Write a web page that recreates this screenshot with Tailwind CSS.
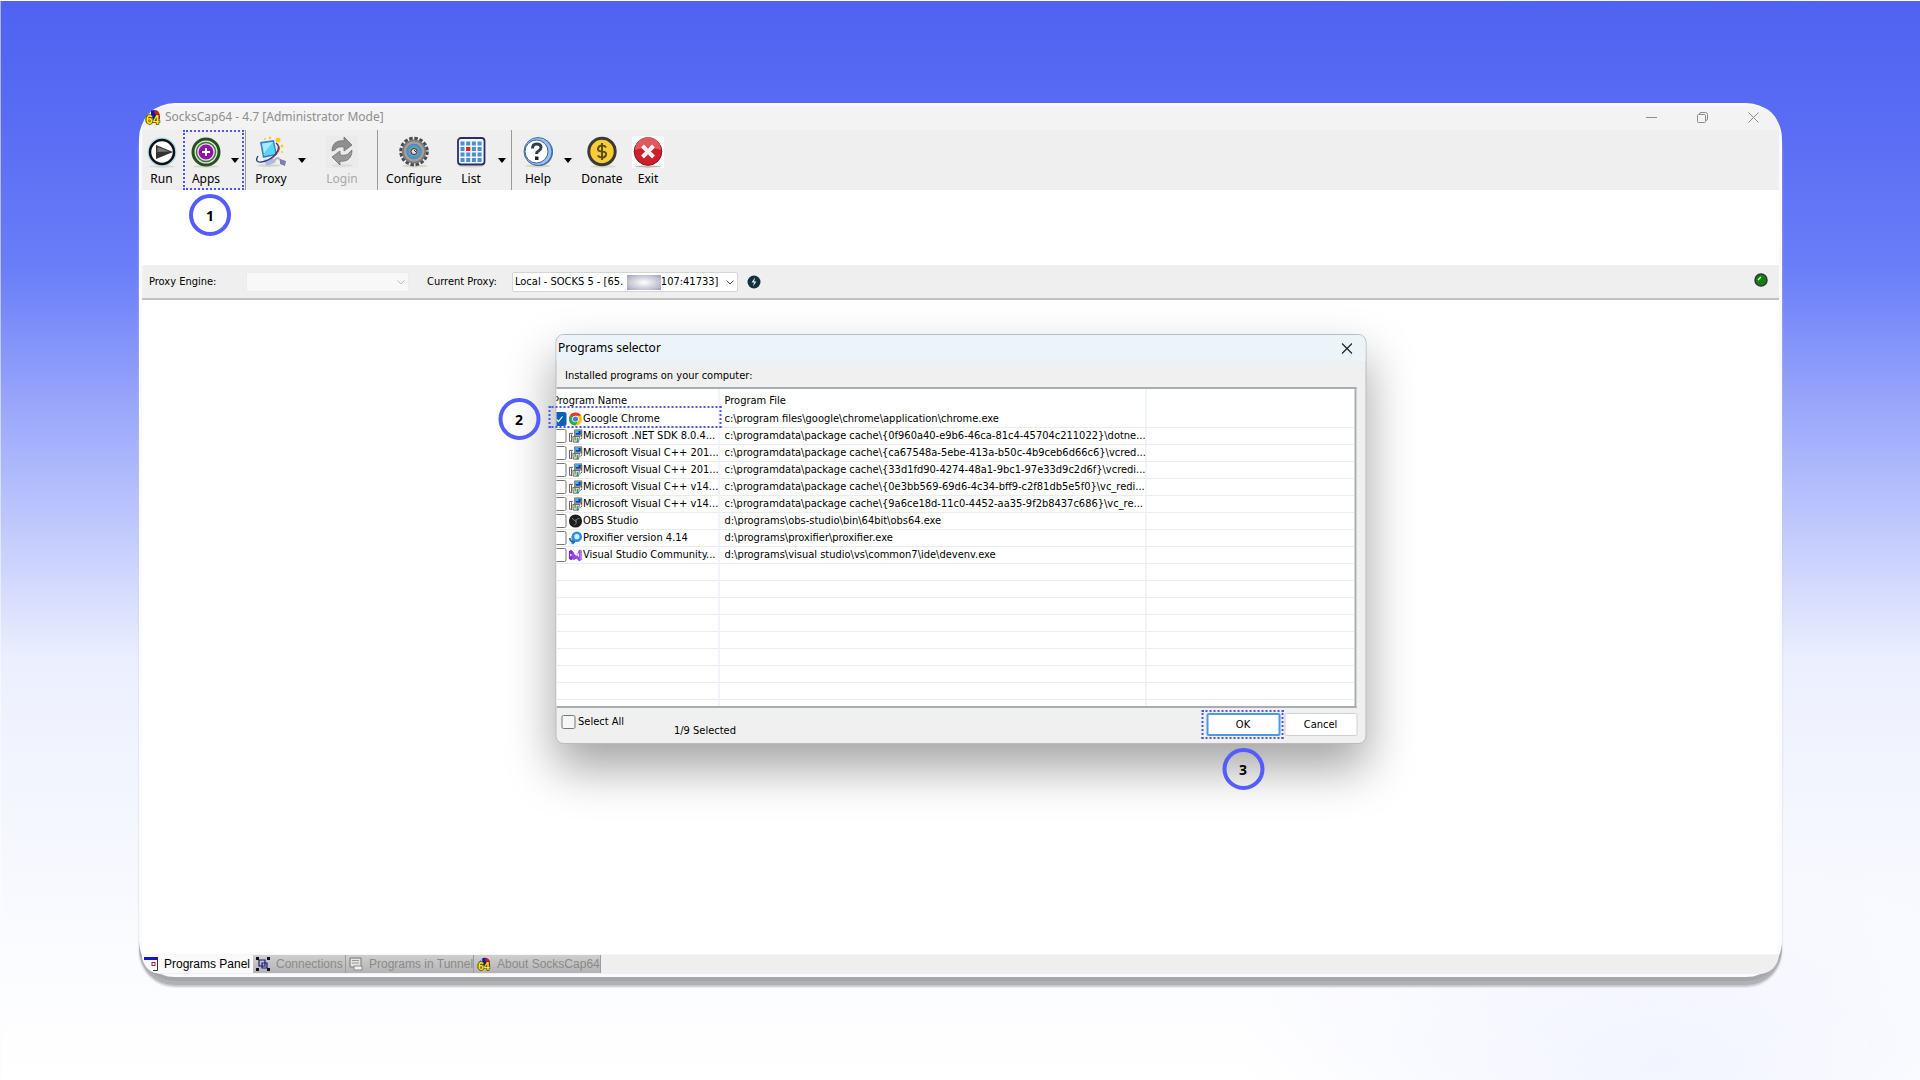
<!DOCTYPE html>
<html lang="en">
<head>
    <meta charset="UTF-8">
    <meta name="viewport" content="width=device-width, initial-scale=1.0">
    <title>SocksCap64 - 4.7 [Administrator Mode]</title>
    <script src="https://cdn.jsdelivr.net/npm/@tailwindcss/browser@4"></script>
</head>
<body class="font-['Noto_Sans',sans-serif] text-xs text-black">

    <!-- Shared icons -->
    <svg class="hidden">
        <symbol id="logo" viewBox="0 0 16 16">
            <path d="M6 1.500q5-2 8 2.500l1 6-4 3-5-5z" fill="#0d17b8"/>
            <path d="M11 1q3 1 3.500 4l.5 5-3-2-3-5z" fill="#e01616"/>
            <path d="M5 3 1 8v5" stroke="#777" fill="none"/>
            <text x="1" y="15" font-family="Liberation Sans" font-size="12" font-weight="bold" fill="#ffe81a" stroke="#4a4300" stroke-width="1.500" paint-order="stroke">64</text>
        </symbol>
        <symbol id="chrome" viewBox="0 0 16 16">
            <circle cx="8" cy="8" r="7.500" fill="#fbc116"/>
            <path d="M8 8 1.500 4.250A7.500 7.500 0 0 1 14.500 4.250H8z" fill="#e33b2e"/>
            <path d="M1.500 4.250A7.500 7.500 0 0 0 8 15.500L11.250 9.900 8 8z" fill="#2da94f"/>
            <circle cx="8" cy="8" r="3.800" fill="#fff"/>
            <circle cx="8" cy="8" r="2.900" fill="#3b7ded"/>
        </symbol>
        <symbol id="setup" viewBox="0 0 16 16">
            <path d="M7 1h8.500v7H7z" fill="#c9cdd0" stroke="#444" stroke-width=".8"/>
            <path d="M8 2h6v4.500H8z" fill="#0a3fae"/>
            <path d="M8 2h3.500v2.500H8z" fill="#29c3ee"/>
            <path d="M15.500 2v8l-2 2" fill="none" stroke="#222"/>
            <path d="M1 5h4M1 5v9h2M3.500 6v9" fill="none" stroke="#444"/>
            <path d="M5 8.500h7.500l-1 6.500H5.500z" fill="#eef3ee" stroke="#333" stroke-width=".8"/>
            <path d="M7.500 9v4M10 10v5" stroke="#14883d" stroke-width="1.300"/>
            <path d="M5 9.500 7 12" stroke="#d9c31c"/>
        </symbol>
        <symbol id="obs" viewBox="0 0 16 16">
            <circle cx="8" cy="8" r="7.500" fill="#1c1c1e"/>
            <path d="M4 4.500q2 4 5 2.500M12.500 5q-4.500.5-4 4M6.500 13q3.500-2 2-5" fill="none" stroke="#8b8b8d"/>
        </symbol>
        <symbol id="proxifier" viewBox="0 0 16 16">
            <circle cx="9.500" cy="6.500" r="4.500" fill="#d3ecfb" stroke="#2f8fdc" stroke-width="3"/>
            <path d="M5 6v9" stroke="#2f8fdc" stroke-width="3"/>
            <path d="M1.500 8q0 5 6 4.500" fill="none" stroke="#1b62b5" stroke-width="2"/>
        </symbol>
        <symbol id="vs" viewBox="0 0 16 16">
            <path d="M0 4 3 2l3 3v7l-3 2-3-2z" fill="#7b2bcb"/>
            <path d="M4 4l5 5 3-7 3.500 1.500v10L12 15l-3-3-3 2-2-2z" fill="#9a45ea"/>
            <path d="M12 5.500v5L9.500 8z" fill="#fff"/>
            <path d="M2 6v4l2-2z" fill="#fff"/>
            <path d="M13 1.500 15.500 3v10L13 14.500z" fill="#c17bf8"/>
        </symbol>
        <symbol id="caret" viewBox="0 0 8 5"><path d="M0 0h8L4 5z"/></symbol>
        <symbol id="tick" viewBox="0 0 14 14"><path d="m4 7.500 2 2 4-5" fill="none" stroke="#fff" stroke-width="1.200"/></symbol>
    </svg>

    <main class="flex min-h-screen flex-col border-l border-t border-l-white/50 border-t-white/40 bg-[radial-gradient(ellipse_420px_220px_at_1660px_1060px,#f2f4ff_0%,#f2f4ff00_100%),linear-gradient(to_bottom,#4f62f1_0%,#5a6df4_12%,#6a7ef8_25%,#9ba8fa_38%,#c8d0fc_51%,#eceffe_61%,#f2f4fe_70%,#fafbff_86%,#ffffff_100%)] bg-cover px-[138px] pt-[102px] pb-[103px]">

        <!-- Main window -->
        <div class="relative flex flex-1 flex-col rounded-[36px] border-[3px] border-[#fbfbff] bg-white shadow-[0_4px_0_0_#a5a6aa,0_8px_0_0_#b0b1b5,0_10px_2px_0_#c4c5ca]">

            <header class="flex h-6 items-center rounded-t-[33px] bg-[#f3f3f3] pb-[2px] pl-[3px]">
                <svg class="size-4"><use href="#logo"/></svg>
                <h1 class="ml-1 text-xs text-[#8e8e8e]">SocksCap64 - 4.7 [Administrator Mode]</h1>
                <div class="ml-auto flex items-center gap-10 pr-5 text-[#8c8c8c]">
                    <button aria-label="Minimize"><svg class="size-[11px]" viewBox="0 0 11 11"><path d="M0 5.500h11" stroke="currentColor"/></svg></button>
                    <button aria-label="Restore"><svg class="size-[11px]" viewBox="0 0 11 11" fill="none" stroke="currentColor"><rect x=".5" y="2.500" width="8" height="8" rx="1"/><path d="M2.500 2.500V2q0-1.500 1.500-1.500h4.500q2 0 2 2V7q0 1.500-2 1.500"/></svg></button>
                    <button aria-label="Close"><svg class="size-[11px]" viewBox="0 0 11 11"><path d="m.5.5 10 10m0-10-10 10" stroke="currentColor"/></svg></button>
                </div>
            </header>

            <!-- Toolbar -->
            <nav class="flex h-[60px] items-stretch bg-[#efefef]">
                <button class="flex w-[39px] flex-col items-center gap-[3px] pt-[6px]">
                    <svg class="size-8" viewBox="0 0 32 32">
                        <ellipse cx="16" cy="30.500" rx="13" ry="1.200" fill="#d9d6c8"/>
                        <circle cx="16" cy="16" r="14.500" fill="#a9dcf2"/>
                        <circle cx="16" cy="16" r="12" fill="#fff" stroke="#111" stroke-width="2.500"/>
                        <path d="M10 9v14l17-7z" fill="#333"/><path d="M11.500 11v5l12-.500z" fill="#777"/>
                    </svg>
                    <span>Run</span>
                </button>
                <div class="relative ml-[2px] flex w-[61px] border-2 border-dotted border-[#4a55f5]">
                    <button class="flex w-[42px] flex-col items-center gap-[3px] pt-1">
                        <svg class="size-8" viewBox="0 0 32 32">
                            <ellipse cx="16" cy="30.500" rx="13" ry="1.200" fill="#d9d6c8"/>
                            <circle cx="16" cy="16" r="13" fill="#dfe8dc" stroke="#26501f" stroke-width="3"/>
                            <circle cx="16" cy="16" r="9.500" fill="#ece8ee" stroke="#45743b" stroke-width="1.500"/>
                            <circle cx="16" cy="16" r="7.500" fill="#9016a8"/>
                            <path d="M16 12v8M12 16h8" stroke="#fff" stroke-width="2"/>
                        </svg>
                        <span>Apps</span>
                    </button>
                    <button aria-label="Apps menu" class="flex-1 pl-1"><svg class="h-[5px] w-2"><use href="#caret"/></svg></button>
                    <span class="absolute left-1 top-[62px] flex size-[42px] items-center justify-center rounded-full border-4 border-[#525dfb] pt-px text-sm font-bold">1</span>
                </div>
                <div class="mx-px w-px bg-[#9a9a9a]"></div>
                <button class="ml-px flex w-[46px] flex-col items-center gap-[3px] pt-[6px]">
                    <svg class="size-8" viewBox="0 0 32 32">
                        <ellipse cx="14" cy="29.500" rx="12" ry="1.500" fill="#d9d6c8"/>
                        <path d="m8 24 10-2 3 4-9 4z" fill="#aeb8e4"/>
                        <path d="M5 6 19 4l3 15L8 22z" fill="#2f83cc"/>
                        <path d="m7 7.500 11-1.500 2.500 12L9 20z" fill="#5bd3f8"/>
                        <path d="m7 7.500 11-1.500L9 17z" fill="#a6ebfd"/>
                        <path d="M21 7c6 4 0 13-8 17C4 28-1 26 3 20" fill="none" stroke="#1d3474" stroke-width="1.300"/>
                        <path d="M24 10q2 6-8 13" fill="none" stroke="#d42020"/>
                        <path d="M18 27q4-8 7-3l3 3" fill="none" stroke="#b4b6cf" stroke-width="2"/>
                        <path d="m25 23 6 2-1 5-5-2z" fill="#7a7fb0"/>
                        <g fill="#fccb18"><circle cx="23" cy="4" r="2.500"/><circle cx="27" cy="10" r="1.500"/><circle cx="15" cy="2" r="1.300"/><circle cx="10" cy="3" r="1"/><circle cx="27" cy="16" r="1"/></g>
                    </svg>
                    <span>Proxy</span>
                </button>
                <button aria-label="Proxy menu" class="w-[14px] pl-1"><svg class="h-[5px] w-2"><use href="#caret"/></svg></button>
                <button disabled class="ml-px flex w-[66px] flex-col items-center gap-[3px] pt-[6px] text-[#a9a9a9]">
                    <svg class="size-8 bg-[#ebebeb]" viewBox="0 0 32 32">
                        <ellipse cx="16" cy="29.500" rx="11" ry="1.500" fill="#ddd"/>
                        <path d="M6 15C6 6 13 4 18 5V1l8 8-8 6v-4q-7-1-9 3z" fill="#8f8f8f" stroke="#6f6f6f" stroke-width=".8"/>
                        <path d="M26 14c0 10-7 12-12 11v4l-8-8 8-6v4q7 1 9-2z" fill="#999" stroke="#707070" stroke-width=".8"/>
                    </svg>
                    <span>Login</span>
                </button>
                <div class="mx-[2px] w-px bg-[#9a9a9a]"></div>
                <button class="ml-px flex w-[66px] flex-col items-center gap-[3px] pt-[6px]">
                    <svg class="size-8" viewBox="0 0 32 32">
                        <ellipse cx="17" cy="30" rx="13" ry="1.500" fill="#d9d6c8"/>
                        <circle cx="16" cy="15.500" r="13" fill="none" stroke="#4c4c4c" stroke-width="3.500" stroke-dasharray="3.400 1.700"/>
                        <circle cx="16" cy="15.500" r="12" fill="#7b7b7b"/>
                        <circle cx="16" cy="15.500" r="9" fill="none" stroke="#a0a0a0" stroke-width="2.500"/>
                        <circle cx="16" cy="15.500" r="6" fill="#8b9297" stroke="#2f9fe6" stroke-width="1.800"/>
                        <circle cx="16" cy="15.500" r="3" fill="#ddd" stroke="#333"/><path d="m16 14 2 2" stroke="#222"/>
                    </svg>
                    <span>Configure</span>
                </button>
                <button class="flex w-12 flex-col items-center gap-[3px] pt-[6px]">
                    <svg class="size-8" viewBox="0 0 32 32">
                        <ellipse cx="16" cy="30" rx="13" ry="1.500" fill="#d9d6c8"/>
                        <rect x="3" y="2" width="26.500" height="26.500" rx="3" fill="#f3f6fb" stroke="#2c2c6c" stroke-width="1.800"/>
                        <path d="M5.500 7.500h22M5.500 13h22M5.500 18.500h22M5.500 24h22" stroke="#4a90cc" stroke-width="4" stroke-dasharray="4 1.700"/>
                        <path d="M11.200 11h4v4h-4z" fill="#ff1515"/>
                    </svg>
                    <span>List</span>
                </button>
                <button aria-label="List menu" class="w-[14px] pl-[3px]"><svg class="h-[5px] w-2"><use href="#caret"/></svg></button>
                <div class="mx-[2px] w-px bg-[#9a9a9a]"></div>
                <button class="flex w-12 flex-col items-center gap-[3px] pt-[6px]">
                    <svg class="size-8" viewBox="0 0 32 32">
                        <ellipse cx="16" cy="30" rx="13" ry="1.500" fill="#d9d6c8"/>
                        <circle cx="17" cy="16" r="14" fill="#2f66ae"/><circle cx="16" cy="15.500" r="14" fill="#9cc0e8" stroke="#3b6db0"/>
                        <circle cx="14.500" cy="15.500" r="11.500" fill="#fff" stroke="#3a5f94"/>
                        <path d="M10.500 12.500q0-4.500 4-4.500 4.500 0 4.500 3.500 0 2-2.500 3.500-2 1-2 3" fill="none" stroke="#33414a" stroke-width="3"/>
                        <path d="M13 20.500h3.500V24H13z" fill="#222"/>
                    </svg>
                    <span>Help</span>
                </button>
                <button aria-label="Help menu" class="w-[14px] pl-[2px]"><svg class="h-[5px] w-2"><use href="#caret"/></svg></button>
                <button class="flex w-[52px] flex-col items-center gap-[3px] pt-[6px]">
                    <svg class="size-8" viewBox="0 0 32 32">
                        <ellipse cx="17" cy="30.500" rx="13" ry="1.200" fill="#d9d6c8"/>
                        <circle cx="16" cy="15.500" r="13.200" fill="#f8cd33" stroke="#3a3a3a" stroke-width="3"/>
                        <path d="M20 11.500q-1-2-4-2t-4 2.800 4 3.200 4 3.300-4 2.700-4.300-2M16 7v17" fill="none" stroke="#5c4d1d" stroke-width="2"/>
                    </svg>
                    <span>Donate</span>
                </button>
                <button class="flex w-10 flex-col items-center gap-[3px] pt-[6px]">
                    <svg class="size-8 bg-white" viewBox="0 0 32 32">
                        <ellipse cx="16" cy="30.500" rx="13" ry="1.200" fill="#bbb"/>
                        <circle cx="16" cy="15.500" r="13.800" fill="#c9202a" stroke="#8f141b"/>
                        <path d="M3 14a13 13 0 0 1 26 0q-13-5-26 0z" fill="#de5a60"/>
                        <path d="m10.500 10 11 11m0-11-11 11" stroke="#f4f4f4" stroke-width="4"/>
                    </svg>
                    <span>Exit</span>
                </button>
            </nav>

            <div class="h-[75px] shrink-0"></div>

            <!-- Proxy bar -->
            <div class="flex h-[35px] items-center border-b-2 border-[#c2c2c2] bg-[#efefef] pl-[7px] pr-[11px] font-['DejaVu_Sans_Condensed','DejaVu_Sans',sans-serif] text-[11px] font-[stretch:condensed]">
                <label for="engine" class="w-[97px] pt-px">Proxy Engine:</label>
                <div class="relative w-[163px]">
                    <select id="engine" disabled class="h-5 w-full appearance-none rounded-xs border border-[#ececec] bg-[#f8f8f8]"><option></option></select>
                    <svg class="pointer-events-none absolute right-1 top-2 h-[5px] w-2" viewBox="0 0 8 5"><path d="m.5.5 3.500 3.500L7.500.5" fill="none" stroke="#bbb"/></svg>
                </div>
                <label for="proxy" class="ml-[18px] w-[85px] pt-px">Current Proxy:</label>
                <div class="relative w-[226px]">
                    <select id="proxy" class="h-5 w-full appearance-none rounded-xs border border-[#d6d6d6] bg-white pl-[2px] pt-px"><option>Local - SOCKS 5 - [65.&nbsp;&nbsp;&nbsp;&nbsp;&nbsp;&nbsp;&nbsp;&nbsp;&nbsp;&nbsp;&nbsp;.107:41733]</option></select>
                    <span class="pointer-events-none absolute left-[115px] top-[3px] h-[15px] w-[34px] bg-[radial-gradient(ellipse,#ffffff_0%,#c4c4d4_65%,#9c9cc4_100%)]"></span>
                    <svg class="pointer-events-none absolute right-1 top-2 h-[5px] w-2" viewBox="0 0 8 5"><path d="m.5.5 3.500 3.500L7.500.5" fill="none" stroke="#555"/></svg>
                </div>
                <button aria-label="Test proxy" class="ml-[9px]"><svg class="size-[14px]" viewBox="0 0 14 14"><circle cx="7" cy="7" r="6.500" fill="#14303a"/><path d="M8 2.500 4.500 7.500H7L6 11.500 9.500 6.500H7.200z" fill="#d8eef2"/></svg></button>
                <svg class="mb-1 ml-auto size-[14px]" viewBox="0 0 14 14"><circle cx="7" cy="7" r="6" fill="#0a850a" stroke="#333" stroke-width="1.500"/><path d="m4 7 3-3" stroke="#fff" stroke-width="1.500"/></svg>
            </div>

            <div class="flex-1"></div>

            <!-- Bottom tabs -->
            <div role="tablist" class="flex h-5 items-start overflow-hidden whitespace-nowrap rounded-b-[33px] border-t border-[#f6f6f6] bg-[#efefef] font-['Liberation_Sans',sans-serif] text-[12px] text-[#8a8a8a]">
                <button role="tab" aria-selected="true" class="flex h-[18px] w-[111px] items-center gap-[6px] bg-[#fafafa] pl-[2px] text-black">
                    <svg class="size-[14px]" viewBox="0 0 14 14"><path d="M0 1.500h14" stroke="#1414c8" stroke-width="3"/><path d="M13.500 2v11.500H9" stroke="#333" fill="none"/><rect x="8" y="5.500" width="3" height="3" fill="#fff" stroke="#a22"/></svg>
                    Programs Panel
                </button>
                <button role="tab" class="flex h-[18px] w-[93px] items-center gap-[6px] border-r border-[#9c9c9c] bg-linear-to-b from-[#cfcfcf] to-[#b4b4b4] pl-[3px]">
                    <svg class="size-[14px]" viewBox="0 0 14 14"><path d="M3 3h6v6H3zM6 6h5v5H6z" fill="none" stroke="#1a1a80" stroke-width="1.200"/><path d="M0 0h3v3H0zM11 0h3v3h-3zM0 11h3v3H0zM11 11h3v3h-3z" fill="#111"/></svg>
                    Connections
                </button>
                <button role="tab" class="flex h-[18px] w-[128px] items-center gap-[6px] border-r border-[#9c9c9c] bg-linear-to-b from-[#cfcfcf] to-[#b4b4b4] pl-[3px]">
                    <svg class="size-[14px] shrink-0" viewBox="0 0 14 14"><path d="M1 1h11v9H1z" fill="#e3e3e3" stroke="#777"/><path d="M3 3.500h7M3 6h7" stroke="#999"/><path d="M5 9h8v4H5z" fill="#f4f4f4" stroke="#888"/></svg>
                    Programs in Tunnel
                </button>
                <button role="tab" class="flex h-[18px] w-[127px] items-center gap-[6px] border-r border-[#9c9c9c] bg-linear-to-b from-[#cfcfcf] to-[#b4b4b4] pl-[3px]">
                    <svg class="size-[14px]"><use href="#logo"/></svg>
                    About SocksCap64
                </button>
            </div>

            <!-- Programs selector dialog -->
            <section role="dialog" aria-label="Programs selector" class="absolute left-1/2 top-[228px] flex w-[811px] -translate-x-1/2 flex-col rounded-lg border border-[#b9bbbd] bg-[#f0f0f0] font-['DejaVu_Sans_Condensed','DejaVu_Sans',sans-serif] text-[11px] leading-4 font-[stretch:condensed] shadow-[0_24px_48px_0_rgba(0,0,0,0.36)]">
                <div class="flex h-[26px] items-center rounded-t-[7px] bg-[#ecf4f9] pl-[2px] pr-[13px] font-['Noto_Sans',sans-serif]">
                    <h2 class="text-[12px]">Programs selector</h2>
                    <button aria-label="Close dialog" class="ml-auto"><svg class="size-[11px]" viewBox="0 0 11 11"><path d="m.5.5 10 10m0-10-10 10" stroke="#222" stroke-width="1.200"/></svg></button>
                </div>
                <p class="h-[26px] pl-[9px] pt-[7px]">Installed programs on your computer:</p>
                <div class="mr-[9px] overflow-hidden border-y-2 border-r-2 border-[#a9adb2] bg-white">
                    <table class="w-full table-fixed border-collapse whitespace-nowrap text-left leading-[14px]">
                        <colgroup><col class="w-[163px]"><col class="w-[427px]"><col></colgroup>
                        <thead>
                            <tr class="h-[21px]"><th class="border-r border-[#e6ebf0] pt-[2px] font-normal"><span class="-ml-[3px]">Program Name</span></th><th class="border-r border-[#e6ebf0] pl-[5px] pt-[2px] font-normal">Program File</th><th></th></tr>
                        </thead>
                        <tbody id="programs"></tbody>
                    </table>
                </div>
                <div class="flex h-[35px] pl-[5px] pr-2">
                    <label class="flex h-4 items-center gap-[3px] pt-3"><input type="checkbox" class="size-[14px] appearance-none rounded-xs border border-[#777] bg-[#f6f6f6]"> Select All</label>
                    <p class="ml-[50px] pt-[15px]">1/9 Selected</p>
                    <div class="relative ml-auto mt-[5px] flex h-[23px] gap-1">
                        <button class="w-[74px] rounded-xs border-2 border-[#4c9be0] bg-white pt-px">OK</button>
                        <button class="w-[73px] rounded-xs border border-[#d0d0d0] bg-white pt-px">Cancel</button>
                        <span class="pointer-events-none absolute -left-[5px] -top-[3px] h-[29px] w-[82px] border-2 border-dotted border-[#4a55f5]"></span>
                        <span class="absolute left-4 top-[35px] flex size-[42px] items-center justify-center rounded-full border-4 border-[#525dfb] pt-px font-['Noto_Sans',sans-serif] text-sm font-bold">3</span>
                    </div>
                </div>
                <span class="pointer-events-none absolute -left-2 top-[71px] h-[22px] w-[173px] border-2 border-dotted border-[#4a55f5]"></span>
                <span class="absolute -left-[58px] top-[63px] flex size-[42px] items-center justify-center rounded-full border-4 border-[#525dfb] pt-px font-['Noto_Sans',sans-serif] text-sm font-bold">2</span>
            </section>
        </div>
    </main>

    <script>
        const programs = [
            ['chrome', 'Google Chrome', 'c:\\program files\\google\\chrome\\application\\chrome.exe'],
            ['setup', 'Microsoft .NET SDK 8.0.4...', 'c:\\programdata\\package cache\\{0f960a40-e9b6-46ca-81c4-45704c211022}\\dotne...'],
            ['setup', 'Microsoft Visual C++ 201...', 'c:\\programdata\\package cache\\{ca67548a-5ebe-413a-b50c-4b9ceb6d66c6}\\vcred...'],
            ['setup', 'Microsoft Visual C++ 201...', 'c:\\programdata\\package cache\\{33d1fd90-4274-48a1-9bc1-97e33d9c2d6f}\\vcredi...'],
            ['setup', 'Microsoft Visual C++ v14...', 'c:\\programdata\\package cache\\{0e3bb569-69d6-4c34-bff9-c2f81db5e5f0}\\vc_redi...'],
            ['setup', 'Microsoft Visual C++ v14...', 'c:\\programdata\\package cache\\{9a6ce18d-11c0-4452-aa35-9f2b8437c686}\\vc_re...'],
            ['obs', 'OBS Studio', 'd:\\programs\\obs-studio\\bin\\64bit\\obs64.exe'],
            ['proxifier', 'Proxifier version 4.14', 'd:\\programs\\proxifier\\proxifier.exe'],
            ['vs', 'Visual Studio Community...', 'd:\\programs\\visual studio\\vs\\common7\\ide\\devenv.exe']
        ];

        // Program rows
        let rows = programs.map(([icon, name, file], i) => `
            <tr class="h-[17px] border-b border-[#ececf0]">
                <td class="overflow-hidden border-r border-[#e6ebf0] p-0">
                    <label class="-ml-1 flex h-4 items-center pt-px">
                        <span class="relative flex">
                            <input type="checkbox" ${i === 0 ? 'checked' : ''} class="size-[14px] appearance-none rounded-xs border border-[#777] bg-white checked:border-[#0f5fb8] checked:bg-[#0f5fb8]">
                            <svg class="pointer-events-none absolute left-0 top-0 size-[14px]"><use href="#tick"/></svg>
                        </span>
                        <svg class="ml-[2px] mr-px size-[14px] shrink-0"><use href="#${icon}"/></svg>
                        ${name}
                    </label>
                </td>
                <td class="border-r border-[#e6ebf0] pb-0 pl-[5px] pr-0 pt-px">${file}</td>
                <td></td>
            </tr>`).join('');

        // Empty rows fill the rest of the list
        for (let i = 0; i < 8; i++) {
            rows += '<tr class="h-[17px] border-b border-[#ececf0]"><td class="border-r border-[#e6ebf0]"></td><td class="border-r border-[#e6ebf0]"></td><td></td></tr>';
        }
        rows += '<tr class="h-[7px]"><td class="border-r border-[#e6ebf0]"></td><td class="border-r border-[#e6ebf0]"></td><td></td></tr>';

        document.getElementById('programs').innerHTML = rows;
    </script>
</body>
</html>
